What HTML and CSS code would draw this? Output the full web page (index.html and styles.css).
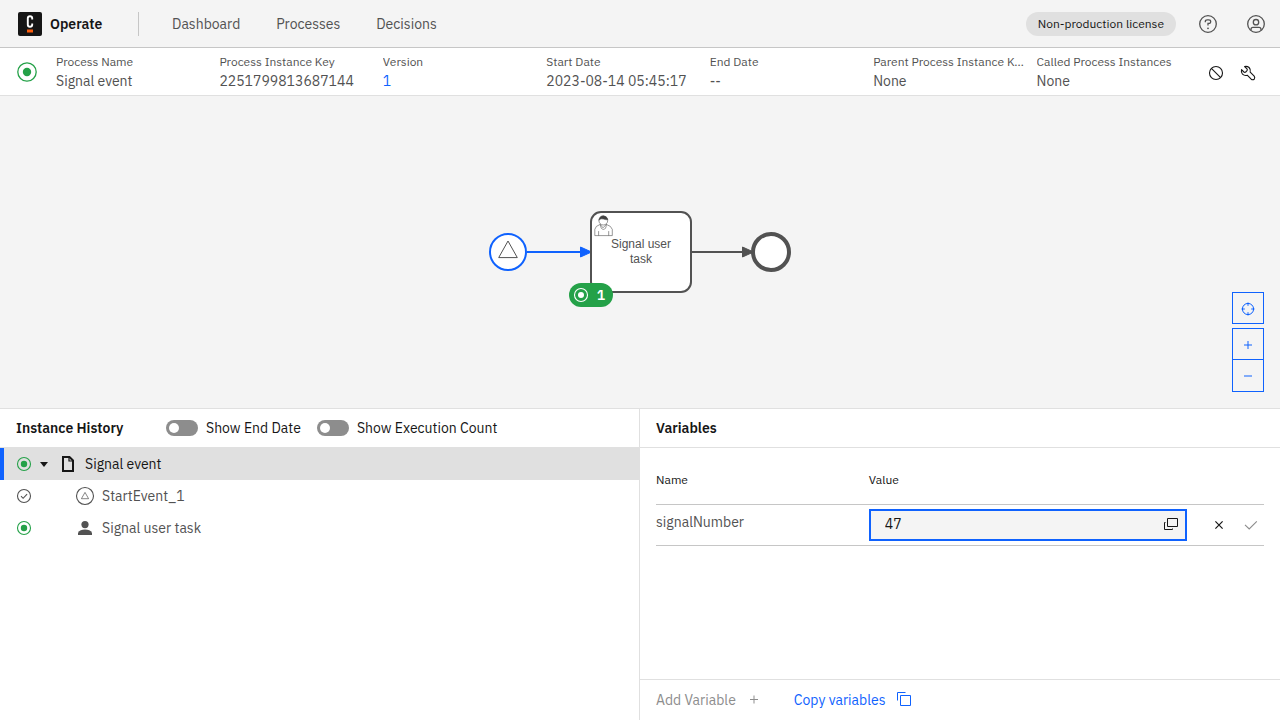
FILE: index.html
```html
<!DOCTYPE html>
<html lang="en">
<head>
<meta charset="utf-8">
<meta name="viewport" content="width=device-width, initial-scale=1">
<title>Operate: Process Instance</title>
<link rel="stylesheet" href="styles.css">
</head>
<body>
<header class="topbar">
  <a class="brand" href="#">
    <svg class="logo" viewBox="0 0 24 24" aria-hidden="true">
      <rect width="24" height="24" rx="2" fill="#161616"/>
      <path d="M14.2 7.4V6.3Q14.2 4.2 12 4.2T9.8 6.3v6.4q0 2.1 2.2 2.1t2.2-2.1v-1.1" fill="none" stroke="#fff" stroke-width="1.9"/>
      <rect x="9" y="17.5" width="6" height="3" fill="#fc5d0d"/>
    </svg>
    <span>Operate</span>
  </a>
  <nav class="nav">
    <a href="#">Dashboard</a>
    <a href="#">Processes</a>
    <a href="#">Decisions</a>
  </nav>
  <span class="tag">Non-production license</span>
  <button class="icon-btn" type="button" aria-label="Help">
    <svg class="icon-20" viewBox="0 0 20 20" fill="none" stroke="#525252" stroke-width="1.3"><circle cx="10" cy="10" r="8.3"/><path d="M7.3 8.2V7.7Q7.3 5.8 9.2 5.8h1.6q1.9 0 1.9 1.8T10.800 9.400H10v2.200"/><circle cx="10" cy="14.3" r=".9" fill="#525252" stroke="none"/></svg>
  </button>
  <button class="icon-btn" type="button" aria-label="Settings">
    <svg class="icon-20" viewBox="0 0 20 20" fill="none" stroke="#525252" stroke-width="1.3"><circle cx="10" cy="10" r="8.3"/><circle cx="10" cy="8.2" r="2.7"/><path d="M5 16.3v-.9q0-2 2-2h6q2 0 2 2v.9"/></svg>
  </button>
</header>

<section class="details" aria-label="Instance details">
  <svg class="state" viewBox="0 0 20 20" role="img" aria-label="Active"><circle cx="10" cy="10" r="9.2" fill="none" stroke="#24a148" stroke-width="1.3"/><circle cx="10" cy="10" r="4.2" fill="#24a148"/></svg>
  <dl class="facts">
    <div><dt>Process Name</dt><dd>Signal event</dd></div>
    <div><dt>Process Instance Key</dt><dd>2251799813687144</dd></div>
    <div><dt>Version</dt><dd><a href="#">1</a></dd></div>
    <div><dt>Start Date</dt><dd>2023-08-14 05:45:17</dd></div>
    <div><dt>End Date</dt><dd>--</dd></div>
    <div><dt>Parent Process Instance Key</dt><dd>None</dd></div>
    <div><dt>Called Process Instances</dt><dd>None</dd></div>
  </dl>
  <div class="operations">
    <button class="op-btn" type="button" aria-label="Cancel instance">
      <svg class="icon-16" viewBox="0 0 16 16" fill="none" stroke="#161616" stroke-width="1.1"><circle cx="8" cy="8" r="6.5"/><path d="M3.4 3.4l9.2 9.2"/></svg>
    </button>
    <button class="op-btn" type="button" aria-label="Modify instance">
      <svg class="icon-16" viewBox="0 0 16 16" fill="none" stroke="#161616" stroke-width="1.1" stroke-linejoin="round"><path d="M4.600 1.500 7 3.900Q7.700 4.800 7 5.700L5.700 7Q4.800 7.700 3.900 7L1.500 4.600Q.9 7.200 2.500 9.100 4.500 11 7.200 10.200L11.200 14.200Q12.700 15.300 14.200 14.200 15.300 12.700 14.200 11.200L10.200 7.200Q11 4.500 9.100 2.500 7.200.9 4.600 1.500Z"/></svg>
    </button>
  </div>
</section>

<main class="content">
  <section class="diagram" aria-label="Diagram">
    <svg class="bpmn" viewBox="488 196 304 112" role="img" aria-label="Signal event process">
      <path d="M527 252h54" stroke="#0f62fe" stroke-width="2"/>
      <path d="M580.5 247v10l11-5z" fill="#0f62fe" stroke="#0f62fe"/>
      <circle cx="508" cy="252" r="18" fill="#fff" stroke="#0f62fe" stroke-width="2"/>
      <path d="M508 241l9.300 16.600h-18.600z" fill="none" stroke="#525252"/>
      <path d="M691 252h53" stroke="#525252" stroke-width="2"/>
      <rect x="591" y="212" width="100" height="80" rx="10" fill="#fff" stroke="#525252" stroke-width="2"/>
      <g fill="#fff" stroke="#525252" stroke-width=".6">
        <path d="M594.800 235.600v-6.200q.4-3.400 5.400-5l2.800 3.400 3.400-3.400q5 1.600 5.900 5v6.200z"/>
        <path d="M598.600 235.600v-4.500M608.700 235.600v-4.500M600.400 224.200q.2 5.200 3 5.200t3-5.200" fill="none"/>
        <circle cx="603.3" cy="220.6" r="4.4"/>
        <path d="M598.900 220.200q1.800-2.200 4.400-1.200 2.800 1 4.600.8-1-4-4.600-4t-4.400 4.400z" fill="#404040"/>
      </g>
      <text class="task-label" x="641" y="248">Signal user</text>
      <text class="task-label" x="641" y="263">task</text>
      <path d="M742.5 247v10l11-5z" fill="#525252" stroke="#525252"/>
      <circle cx="771" cy="252" r="18" fill="#fff" stroke="#525252" stroke-width="4"/>
      <rect x="569" y="283" width="44" height="24" rx="12" fill="#24a148"/>
      <circle cx="581" cy="295" r="6.5" fill="none" stroke="#fff" stroke-width="1.1"/>
      <circle cx="581" cy="295" r="3" fill="#fff"/>
      <text class="badge-count" x="601" y="300">1</text>
    </svg>
    <div class="zoom">
      <button type="button" aria-label="Reset diagram zoom">
        <svg class="icon-16" viewBox="0 0 16 16" fill="none" stroke="#0f62fe" stroke-width="1"><circle cx="8" cy="8" r="5.6"/><path d="M8 1.5v3.3M8 11.2v3.3M1.5 8h3.3M11.2 8h3.3"/></svg>
      </button>
      <div class="zoom-pair">
        <button type="button" aria-label="Zoom in diagram">
          <svg class="icon-16" viewBox="0 0 16 16" stroke="#0f62fe"><path d="M8 4v8M4 8h8"/></svg>
        </button>
        <button type="button" aria-label="Zoom out diagram">
          <svg class="icon-16" viewBox="0 0 16 16" stroke="#0f62fe"><path d="M4 8h8"/></svg>
        </button>
      </div>
    </div>
  </section>

  <div class="panels">
    <section class="panel history">
      <div class="panel-head">
        <h2>Instance History</h2>
        <label class="toggle"><input type="checkbox" role="switch"><span>Show End Date</span></label>
        <label class="toggle"><input type="checkbox" role="switch"><span>Show Execution Count</span></label>
      </div>
      <ul class="tree">
        <li>
          <div class="node selected">
            <svg class="icon-16" viewBox="0 0 16 16"><circle cx="8" cy="8" r="6.5" fill="none" stroke="#24a148" stroke-width="1.1"/><circle cx="8" cy="8" r="3.2" fill="#24a148"/></svg>
            <button class="caret" type="button" aria-label="Collapse Signal event"><svg class="icon-16" viewBox="0 0 16 16"><path d="M4 6h8l-4 5z" fill="#161616"/></svg></button>
            <svg class="icon-doc" viewBox="0 0 18 18" fill="none" stroke="#161616" stroke-width="2"><path d="M4 2h6.500L14 5.500V16H4z"/><path d="M10 2v4h4" stroke-width="1.2"/></svg>
            <span>Signal event</span>
          </div>
          <ul class="tree">
            <li class="node child">
              <svg class="icon-16" viewBox="0 0 16 16" fill="none" stroke="#525252" stroke-width="1.1"><circle cx="8" cy="8" r="6.5"/><path d="M5 8.200l2.100 2.100 4-4.200"/></svg>
              <svg class="icon-element" viewBox="0 0 20 20" fill="none" stroke="#525252"><circle cx="10" cy="10" r="8.5" stroke-width="1.1"/><path d="M10 6.400l3.600 6.300H6.400z" stroke-width=".7"/></svg>
              <span>StartEvent_1</span>
            </li>
            <li class="node child">
              <svg class="icon-16" viewBox="0 0 16 16"><circle cx="8" cy="8" r="6.5" fill="none" stroke="#24a148" stroke-width="1.1"/><circle cx="8" cy="8" r="3.2" fill="#24a148"/></svg>
              <svg class="icon-element" viewBox="0 0 20 20" fill="#525252"><circle cx="10" cy="6.600" r="3.600"/><path d="M3 17v-2.200Q5 11.500 10 11.500t7 3.300V17z"/></svg>
              <span>Signal user task</span>
            </li>
          </ul>
        </li>
      </ul>
    </section>

    <section class="panel variables">
      <div class="panel-head"><h2>Variables</h2></div>
      <div class="panel-body">
        <table class="vars">
          <thead><tr><th class="col-name" scope="col">Name</th><th scope="col">Value</th><th class="col-ops" aria-label="Actions"></th></tr></thead>
          <tbody>
            <tr>
              <td class="name">signalNumber</td>
              <td>
                <div class="field">
                  <input type="text" value="47" aria-label="Value">
                  <button type="button" aria-label="Open JSON editor modal"><svg class="icon-16" viewBox="0 0 16 16" fill="none" stroke="#161616"><path d="M4.500 2.500h10v8h-10zM2.500 6.500h-1v7h8v-1"/></svg></button>
                </div>
              </td>
              <td>
                <div class="edit-ops">
                  <button class="op-btn" type="button" aria-label="Exit edit mode"><svg class="icon-16" viewBox="0 0 16 16" fill="none" stroke="#161616" stroke-width="1.2"><path d="M4.400 4.400l7.200 7.200M11.600 4.400l-7.200 7.200"/></svg></button>
                  <button class="op-btn" type="button" aria-label="Save variable" disabled><svg class="icon-16" viewBox="0 0 16 16" fill="none" stroke="#8d8d8d" stroke-width="1.1"><path d="M2 7.800l4.200 4.200L13.800 4.400"/></svg></button>
                </div>
              </td>
            </tr>
          </tbody>
        </table>
      </div>
      <div class="panel-foot">
        <button class="text-btn" type="button" disabled>Add Variable<svg class="icon-16" viewBox="0 0 16 16" stroke="#8d8d8d"><path d="M8 3.500v8M4 7.500h8"/></svg></button>
        <button class="text-btn" type="button">Copy variables<svg class="icon-16" viewBox="0 0 16 16" fill="none" stroke="#0f62fe"><path d="M4.500 3.500h10v10h-10zM1.500 8.500v-8h8"/></svg></button>
      </div>
    </section>
  </div>
</main>
</body>
</html>
```

FILE: styles.css
```css
*,
*::before {
  box-sizing: border-box;
}

body {
  margin: 0;
  min-height: 100vh;
  display: flex;
  flex-direction: column;
  background: #fff;
  color: #525252;
  font: 14px/18px "IBM Plex Sans", "Noto Sans", sans-serif;
}

h2, dl, dd, ul {
  margin: 0;
  padding: 0;
}

ul {
  list-style: none;
}

a {
  color: inherit;
  text-decoration: none;
}

button {
  display: flex;
  align-items: center;
  justify-content: center;
  padding: 0;
  border: 0;
  background: none;
  color: inherit;
  font: inherit;
}

svg {
  display: block;
  flex: none;
}

.icon-16 {
  width: 16px;
  height: 16px;
}

.icon-20 {
  width: 20px;
  height: 20px;
}

.topbar {
  display: flex;
  align-items: center;
  height: 48px;
  padding-left: 18px;
  background: #f4f4f4;
  border-bottom: 1px solid #c6c6c6;
}

.brand {
  display: flex;
  align-items: center;
  gap: 8px;
  min-width: 120px;
  color: #161616;
  font-weight: 600;
}

.logo {
  width: 24px;
  height: 24px;
}

.nav {
  flex: 1;
  display: flex;
  gap: 36px;
  padding-left: 33px;
  border-left: 1px solid #c6c6c6;
  line-height: 24px;
}

.tag {
  padding: 0 12px;
  border-radius: 12px;
  background: #e0e0e0;
  color: #161616;
  font-size: 12px;
  line-height: 24px;
}

.icon-btn {
  width: 48px;
  height: 47px;
}

.tag + .icon-btn {
  margin-left: 8px;
}

.details {
  display: flex;
  align-items: center;
  height: 48px;
  border-bottom: 1px solid #e0e0e0;
}

.state {
  width: 20px;
  height: 20px;
  margin: 0 19px 0 17px;
}

.facts {
  flex: 1;
  display: grid;
  grid-template-columns: repeat(7, minmax(0, 1fr));
}

.facts dt {
  overflow: hidden;
  padding-right: 12px;
  white-space: nowrap;
  text-overflow: ellipsis;
  font-size: 12px;
  line-height: 18px;
}

.facts dd {
  line-height: 20px;
  white-space: nowrap;
}

.facts a {
  color: #0f62fe;
}

.operations {
  display: flex;
  width: 80px;
  padding: 2px 16px 0 0;
}

.op-btn {
  width: 32px;
  height: 32px;
}

.content {
  flex: 1;
  display: grid;
  grid-template-rows: 1fr 1fr;
}

.diagram {
  position: relative;
  display: flex;
  align-items: center;
  justify-content: center;
  background: #f4f4f4;
}

.bpmn {
  width: 304px;
  height: 112px;
}

.task-label {
  fill: #525252;
  font: 12px "Liberation Sans", Arial, sans-serif;
  text-anchor: middle;
}

.badge-count {
  fill: #fff;
  font-size: 14px;
  font-weight: 600;
  text-anchor: middle;
}

.zoom {
  position: absolute;
  right: 16px;
  bottom: 16px;
  display: grid;
  gap: 4px;
}

.zoom button {
  width: 32px;
  height: 32px;
  padding-top: 2px;
  border: 1px solid #0f62fe;
}

.zoom-pair button + button {
  height: 33px;
  margin-top: -1px;
  padding-top: 1px;
}

.panels {
  display: grid;
  grid-template-columns: minmax(0, 1fr) minmax(0, 1fr);
  border-top: 1px solid #e0e0e0;
}

.panel {
  display: flex;
  flex-direction: column;
}

.history {
  border-right: 1px solid #e0e0e0;
}

.panel-head {
  display: flex;
  align-items: center;
  gap: 16px;
  height: 39px;
  padding: 0 16px;
  border-bottom: 1px solid #e0e0e0;
  color: #161616;
}

.panel-head h2 {
  min-width: 134px;
  font-size: 14px;
  font-weight: 600;
  white-space: nowrap;
}

.toggle {
  display: flex;
  align-items: center;
  gap: 8px;
  white-space: nowrap;
}

.toggle input {
  appearance: none;
  display: flex;
  width: 32px;
  height: 16px;
  margin: 0;
  padding: 3px;
  border-radius: 8px;
  background: #8d8d8d;
}

.toggle input::before {
  content: "";
  width: 10px;
  height: 10px;
  border-radius: 50%;
  background: #fff;
}

.node {
  display: flex;
  align-items: center;
  height: 32px;
  padding-left: 16px;
}

.node.selected {
  padding-left: 12px;
  border-left: 4px solid #0f62fe;
  background: #e0e0e0;
  color: #161616;
}

.caret {
  width: 24px;
  height: 24px;
}

.icon-doc {
  width: 18px;
  height: 18px;
  margin: 0 8px 0 3px;
}

.icon-element {
  width: 20px;
  height: 20px;
  margin: 0 7px 0 43px;
}

.panel-body {
  flex: 1;
  padding: 8px 16px;
}

.vars {
  width: 100%;
  border-collapse: collapse;
  table-layout: fixed;
}

.vars th,
.vars td {
  padding: 0;
  border-bottom: 1px solid #c6c6c6;
  text-align: left;
}

.vars th {
  height: 48px;
  color: #161616;
  font-size: 12px;
  font-weight: 400;
}

.vars td {
  height: 41px;
}

.vars .name {
  padding-bottom: 5px;
}

.col-name {
  width: 35%;
}

.col-ops {
  width: 77px;
}

.field {
  display: flex;
  align-items: center;
  height: 32px;
  padding-bottom: 2px;
  border: 2px solid #0f62fe;
  background: #f4f4f4;
}

.field input {
  flex: 1;
  min-width: 0;
  padding: 0 0 0 14px;
  border: 0;
  outline: 0;
  background: none;
  color: #161616;
  font: inherit;
}

.field button {
  width: 28px;
  height: 26px;
}

.edit-ops {
  display: flex;
  justify-content: flex-end;
  margin-right: -3px;
}

.panel-foot {
  display: flex;
  align-items: center;
  gap: 32px;
  height: 41px;
  padding: 0 16px;
  border-top: 1px solid #e0e0e0;
}

.text-btn {
  gap: 10px;
  color: #0f62fe;
}

.text-btn:disabled {
  color: #8d8d8d;
}
```
